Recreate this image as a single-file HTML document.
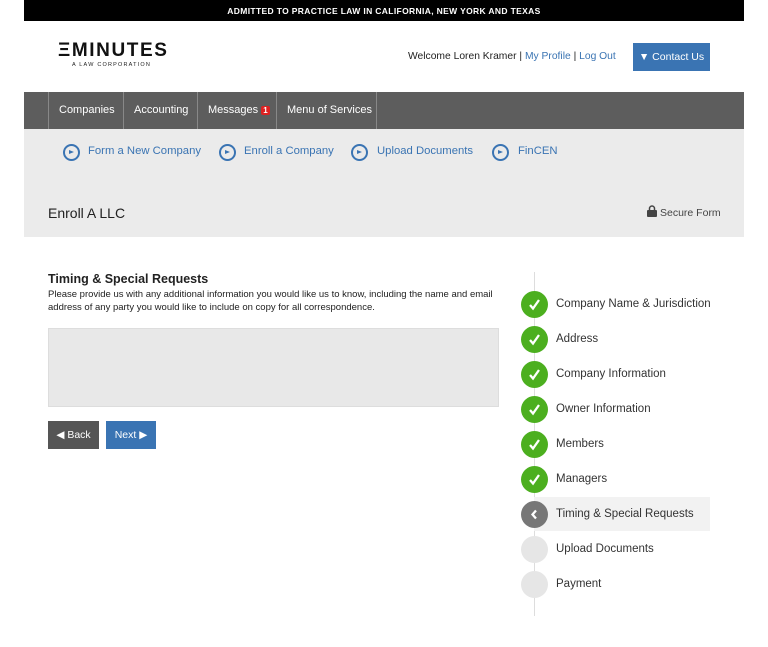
<!DOCTYPE html>
<html><head><style>
*{margin:0;padding:0;box-sizing:border-box}
body{width:768px;height:647px;background:#fff;font-family:"Liberation Sans",sans-serif;position:relative;overflow:hidden;color:#222}
.a{position:absolute}
.top{left:24px;top:0;width:720px;height:21px;background:#000;color:#fff;font-size:8.5px;font-weight:bold;letter-spacing:.35px;text-align:center;line-height:22px}
.nav{left:24px;top:92px;width:720px;height:37px;background:#5d5d5d}
.nav div{position:absolute;top:0;height:37px;border-left:1px solid #888;color:#fff;font-size:11px;line-height:37px;padding-left:10px}
.sub{left:24px;top:129px;width:720px;height:108px;background:#ebebeb}
.lnk{color:#3a74b3;font-size:11.3px;top:145px}
.ci{width:17px;height:17px;border:2px solid #3a74b3;border-radius:50%;top:144px}
.ci:after{content:"";position:absolute;left:4px;top:4px;border-left:5px solid #3a74b3;border-top:2.5px solid transparent;border-bottom:2.5px solid transparent}
.st{left:521px;width:27px;height:27px;border-radius:50%;background:#4caf1f}
.st svg{position:absolute;left:6px;top:6px}
.lb{left:556px;font-size:11.5px;color:#333}
</style></head><body>
<div class="a top">ADMITTED TO PRACTICE LAW IN CALIFORNIA, NEW YORK AND TEXAS</div>
<div class="a" style="left:58px;top:40px;font-size:19px;letter-spacing:1.6px;font-weight:bold;color:#111">ΞMINUTES</div>
<div class="a" style="left:72px;top:62px;font-size:5.5px;letter-spacing:1.2px;color:#222">A LAW CORPORATION</div>
<div class="a" style="left:408px;top:51px;font-size:10.3px;color:#222">Welcome Loren Kramer | <span style="color:#3a74b3">My Profile</span> | <span style="color:#3a74b3">Log Out</span></div>
<div class="a" style="left:633px;top:43px;width:77px;height:28px;background:#3a74b3;color:#fff;font-size:10.5px;line-height:28px;text-align:center">▼ Contact Us</div>
<div class="a nav">
<div style="left:24px;width:76px">Companies</div>
<div style="left:99px;width:75px">Accounting</div>
<div style="left:173px;width:80px">Messages <span style="background:#d22;border-radius:2px;font-size:8px;padding:0 2px;font-weight:bold">1</span></div>
<div style="left:252px;width:101px;border-right:1px solid #888">Menu of Services</div>
</div>
<div class="a sub"></div>
<div class="a ci" style="left:63px"></div><div class="a lnk" style="left:88px">Form a New Company</div>
<div class="a ci" style="left:219px"></div><div class="a lnk" style="left:244px">Enroll a Company</div>
<div class="a ci" style="left:351px"></div><div class="a lnk" style="left:377px">Upload Documents</div>
<div class="a ci" style="left:492px"></div><div class="a lnk" style="left:518px">FinCEN</div>
<div class="a" style="left:48px;top:205px;font-size:14px;color:#222">Enroll A LLC</div>
<div class="a" style="left:647px;top:205px;font-size:10.5px;color:#444"><svg width="10" height="12" viewBox="0 0 10 12" style="vertical-align:-1px;margin-right:3px"><path d="M2.5 5V3.5a2.5 2.5 0 0 1 5 0V5" stroke="#444" stroke-width="1.5" fill="none"/><rect x="0" y="5" width="10" height="7" rx="1" fill="#444"/></svg>Secure Form</div>
<div class="a" style="left:48px;top:272px;font-size:12.5px;font-weight:bold;color:#222">Timing &amp; Special Requests</div>
<div class="a" style="left:48px;top:288px;width:480px;font-size:9.5px;line-height:13px;color:#222">Please provide us with any additional information you would like us to know, including the name and email address of any party you would like to include on copy for all correspondence.</div>
<div class="a" style="left:48px;top:328px;width:451px;height:79px;background:#e8e8e8;border:1px solid #ddd"></div>
<div class="a" style="left:48px;top:421px;width:51px;height:28px;background:#555;color:#fff;font-size:10.5px;line-height:28px;text-align:center">◀ Back</div>
<div class="a" style="left:106px;top:421px;width:50px;height:28px;background:#3a74b3;color:#fff;font-size:10.5px;line-height:28px;text-align:center">Next ▶</div>
<div class="a" style="left:534px;top:272px;width:1px;height:344px;background:#ddd"></div>
<div class="a" style="left:534px;top:497px;width:176px;height:34px;background:#f2f2f2"></div>
<div class="a st" style="top:291px"><svg width="15" height="15" viewBox="0 0 15 15"><path d="M3 8l3 3.5L12 3" stroke="#fff" stroke-width="2.3" fill="none"/></svg></div>
<div class="a st" style="top:326px"><svg width="15" height="15" viewBox="0 0 15 15"><path d="M3 8l3 3.5L12 3" stroke="#fff" stroke-width="2.3" fill="none"/></svg></div>
<div class="a st" style="top:361px"><svg width="15" height="15" viewBox="0 0 15 15"><path d="M3 8l3 3.5L12 3" stroke="#fff" stroke-width="2.3" fill="none"/></svg></div>
<div class="a st" style="top:396px"><svg width="15" height="15" viewBox="0 0 15 15"><path d="M3 8l3 3.5L12 3" stroke="#fff" stroke-width="2.3" fill="none"/></svg></div>
<div class="a st" style="top:431px"><svg width="15" height="15" viewBox="0 0 15 15"><path d="M3 8l3 3.5L12 3" stroke="#fff" stroke-width="2.3" fill="none"/></svg></div>
<div class="a st" style="top:466px"><svg width="15" height="15" viewBox="0 0 15 15"><path d="M3 8l3 3.5L12 3" stroke="#fff" stroke-width="2.3" fill="none"/></svg></div>
<div class="a st" style="top:501px;background:#777"><svg width="15" height="15" viewBox="0 0 15 15"><path d="M9 3.5L5.5 7.5 9 11.5" stroke="#fff" stroke-width="2.3" fill="none"/></svg></div>
<div class="a st" style="top:536px;background:#e6e6e6"></div>
<div class="a st" style="top:571px;background:#e6e6e6"></div>
<div class="a lb" style="top:298px">Company Name &amp; Jurisdiction</div>
<div class="a lb" style="top:333px">Address</div>
<div class="a lb" style="top:368px">Company Information</div>
<div class="a lb" style="top:403px">Owner Information</div>
<div class="a lb" style="top:438px">Members</div>
<div class="a lb" style="top:473px">Managers</div>
<div class="a lb" style="top:508px">Timing &amp; Special Requests</div>
<div class="a lb" style="top:543px">Upload Documents</div>
<div class="a lb" style="top:578px">Payment</div>
</body></html>
